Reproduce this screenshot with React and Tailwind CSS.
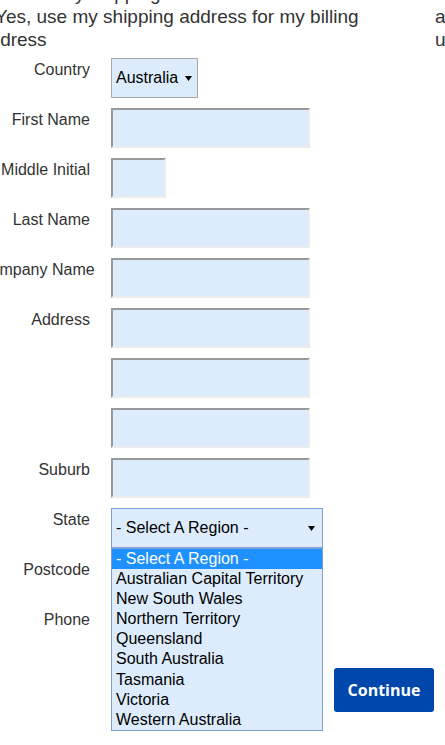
import React from "react";

const inputClass =
  "h-[40px] bg-[#dcecfc] border-2 border-solid border-t-[#999] border-l-[#999] border-r-[#ececec] border-b-[#ececec] outline-none";

const rows = [
  { label: "First Name", width: "w-[199px]" },
  { label: "Middle Initial", width: "w-[55px]" },
  { label: "Last Name", width: "w-[199px]" },
  { label: "Company Name", width: "w-[199px]" },
  { label: "Address", width: "w-[199px]" },
  { label: "", width: "w-[199px]" },
  { label: "", width: "w-[199px]" },
  { label: "Suburb", width: "w-[199px]" },
];

const regions = [
  "- Select A Region -",
  "Australian Capital Territory",
  "New South Wales",
  "Northern Territory",
  "Queensland",
  "South Australia",
  "Tasmania",
  "Victoria",
  "Western Australia",
];

function Caret() {
  return (
    <svg width="7" height="5" viewBox="0 0 7 5" className="shrink-0">
      <path d="M0 0h7L3.5 5z" fill="#000" />
    </svg>
  );
}

function Label({ children }) {
  return (
    <div className="w-[111px] shrink-0 text-right whitespace-nowrap text-[16px] leading-[18px] pt-[3px] text-[#333]">
      {children}
    </div>
  );
}

export default function App() {
  return (
    <div className="relative w-[445px] h-[745px] overflow-hidden bg-white font-['Liberation_Sans',Arial,sans-serif]">
      <div className="flex ml-[-21px] mt-[-18px]">
        {/* Left column */}
        <div className="w-[456px] shrink-0">
          <div className="text-[19px] leading-[23px] text-[#333] whitespace-nowrap">
            <div>Same as my shipping address?</div>
            <div>
              <span className="inline-block w-[16px]"></span>Yes, use my shipping address for my billing
            </div>
            <div>address</div>
          </div>

          <div className="mt-[7px] flex flex-col gap-[10px]">
            {/* Country */}
            <div className="flex">
              <Label>Country</Label>
              <div className="ml-[21px] w-[87px] h-[40px] border border-[#a9a9a9] bg-[#dcecfc] flex items-center gap-[7px] pl-[4px] text-[16px] text-black">
                <span>Australia</span>
                <Caret />
              </div>
            </div>

            {rows.map((r, i) => (
              <div key={i} className="flex">
                <Label>{r.label}</Label>
                <div className={`ml-[21px] ${r.width} ${inputClass}`}></div>
              </div>
            ))}

            {/* State */}
            <div className="flex">
              <Label>State</Label>
              <div className="relative ml-[21px]">
                <div className="w-[212px] h-[40px] border border-[#7fa0d6] bg-[#dcecfc] flex items-center justify-between pl-[4px] pr-[7px] text-[16px] text-black">
                  <span>- Select A Region -</span>
                  <Caret />
                </div>
                <ul className="absolute left-0 top-[40px] z-10 w-[212px] border border-[#7fa0d6] bg-[#dcecfc] text-[16px] leading-[20.1px] text-black">
                  {regions.map((reg, i) => (
                    <li
                      key={reg}
                      className={`pl-[4px] whitespace-nowrap ${i === 0 ? "bg-[#1e90ff] text-white" : ""}`}
                    >
                      {reg}
                    </li>
                  ))}
                </ul>
              </div>
            </div>

            <div className="flex">
              <Label>Postcode</Label>
              <div className={`ml-[21px] w-[120px] ${inputClass}`}></div>
            </div>

            <div className="flex">
              <Label>Phone</Label>
              <div className={`ml-[21px] w-[199px] ${inputClass}`}></div>
            </div>

            <div className="flex justify-end pr-[1px] mt-[10px]">
              <button className="w-[100px] h-[44px] rounded-[3px] bg-[#0047ab] text-white text-[16px] font-bold font-['Open_Sans',sans-serif]">
                Continue
              </button>
            </div>
          </div>
        </div>

        {/* Right column */}
        <div className="w-[200px] shrink-0 text-[19px] leading-[23px] text-[#333] whitespace-nowrap">
          <div>Not now</div>
          <div>a different</div>
          <div>use</div>
        </div>
      </div>
    </div>
  );
}
